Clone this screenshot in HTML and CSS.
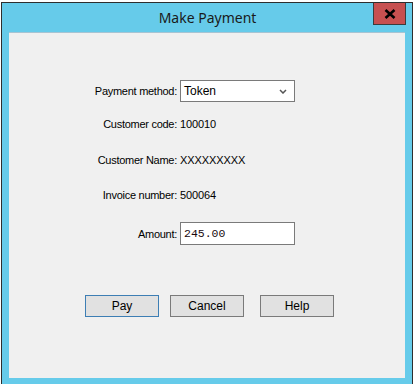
FILE: index.html
```html
<!DOCTYPE html>
<html>
<head>
<meta charset="utf-8">
<link rel="stylesheet" href="styles.css">
</head>
<body>
<div class="window">
  <div class="titlebar">
    <span class="side"></span>
    <span class="title">Make Payment</span>
    <span class="side right">
      <span class="close">
        <svg width="12" height="10" viewBox="0 0 12 10"><path d="M1.5 1 L10.5 9 M10.5 1 L1.5 9" stroke="#000" stroke-width="2.6" stroke-linecap="butt"/></svg>
      </span>
    </span>
  </div>
  <div class="client">
    <div class="form">
      <div class="row r1">
        <span class="label">Payment method:</span>
        <div class="select">
          <span>Token</span>
          <svg width="8" height="5" viewBox="0 0 8 5"><path d="M1 1 L4 4 L7 1" stroke="#555" stroke-width="1.5" fill="none"/></svg>
        </div>
      </div>
      <div class="row r2">
        <span class="label">Customer code:</span>
        <span class="value">100010</span>
      </div>
      <div class="row r3">
        <span class="label">Customer Name:</span>
        <span class="value">XXXXXXXXX</span>
      </div>
      <div class="row r4">
        <span class="label">Invoice number:</span>
        <span class="value">500064</span>
      </div>
      <div class="row r5">
        <span class="label">Amount:</span>
        <div class="input">245.00</div>
      </div>
    </div>
    <div class="buttons">
      <span class="btn default">Pay</span>
      <span class="btn cancel">Cancel</span>
      <span class="btn help">Help</span>
    </div>
  </div>
</div>
</body>
</html>
```
FILE: styles.css
```css
* { box-sizing: border-box; }
html, body { margin: 0; padding: 0; }
body {
  width: 416px;
  height: 384px;
  overflow: hidden;
  background: #ffffff;
  font-family: "Liberation Sans", Arial, sans-serif;
}
.window {
  margin: 2px 0 0 1px;
  width: 412px;
  height: 400px;
  border: 1px solid #2e2e2e;
  background: #66cbea;
  padding: 0 7px 7px 7px;
}
.titlebar {
  height: 29px;
  display: grid;
  grid-template-columns: 1fr auto 1fr;
  align-items: start;
  margin-right: -1px;
}
.title {
  font-family: "Noto Sans", "Open Sans", sans-serif;
  font-size: 14px;
  color: #1a1a1a;
  line-height: 29px;
}
.side.right {
  display: flex;
  justify-content: flex-end;
}
.close {
  width: 33px;
  height: 22px;
  background: #c75050;
  border: 1px solid #3c3c3c;
  border-top: none;
  display: flex;
  align-items: center;
  justify-content: center;
}
.client {
  height: 346px;
  background: #f0f0f0;
  border-top: 1px solid #a7c4d3;
  font-size: 11px;
  color: #000;
}
.form {
  padding-top: 47px;
  display: flex;
  flex-direction: column;
}
.row {
  display: grid;
  grid-template-columns: 168px auto;
  column-gap: 3px;
  align-items: center;
  height: 22px;
}
.label {
  text-align: right;
  white-space: nowrap;
  letter-spacing: -0.27px;
}
.value { letter-spacing: -0.1px; }
.r2 { margin-top: 11px; }
.r3 { margin-top: 14px; }
.r4 { margin-top: 13px; }
.r5 { margin-top: 16px; height: 23px; }
.select {
  width: 115px;
  height: 22px;
  background: #fff;
  border: 1px solid #7a7a7a;
  display: flex;
  align-items: center;
  justify-content: space-between;
  padding: 0 7px 0 3px;
  font-size: 12px;
}
.input {
  width: 115px;
  height: 23px;
  background: #fff;
  border: 1px solid #7a7a7a;
  display: flex;
  align-items: center;
  padding-left: 3px;
  font-family: "Liberation Mono", "Courier New", monospace;
  font-size: 11.5px;
  color: #1a0a10;
}
.buttons {
  margin-top: 50px;
  padding-left: 76px;
  display: flex;
}
.btn {
  width: 74px;
  height: 22px;
  background: #e1e1e1;
  border: 1px solid #7a7a7a;
  display: flex;
  align-items: center;
  justify-content: center;
  font-size: 12px;
}
.btn.default { border-color: #3d7eb4; }
.btn.cancel { margin-left: 11px; }
.btn.help { margin-left: 16px; }
```
